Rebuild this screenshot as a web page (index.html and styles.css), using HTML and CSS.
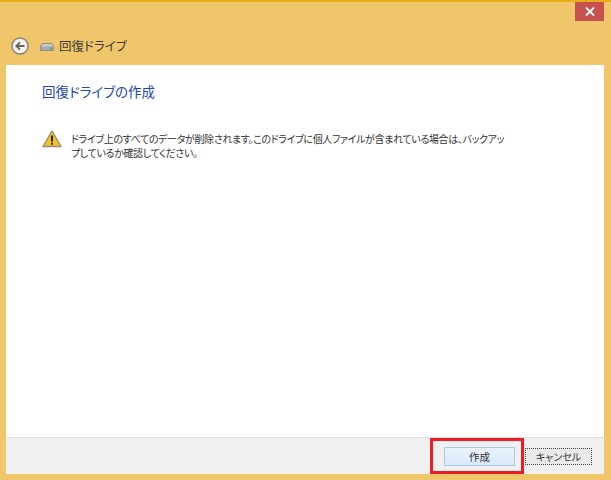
FILE: index.html
```html
<!DOCTYPE html>
<html lang="ja">
<head>
    <meta charset="utf-8">
    <link rel="stylesheet" href="styles.css">
</head>
<body>
    <div class="window">
        <div class="titlebar">
            <button class="close">
                <svg width="10" height="9" viewBox="0 0 10 9"><path d="M1 0.5 L9 8.5 M9 0.5 L1 8.5" stroke="#fff" stroke-width="1.8"/></svg>
            </button>
        </div>
        <div class="nav">
            <div class="back">
                <svg width="18" height="18" viewBox="0 0 18 18">
                    <circle cx="9" cy="9" r="8" fill="#f6f3ec" stroke="#8a867c" stroke-width="1.5"/>
                    <path d="M13.5 9 H5.5 M9 5.4 L5.3 9 L9 12.6" fill="none" stroke="#66645f" stroke-width="1.8"/>
                </svg>
            </div>
            <svg class="drive" width="14" height="8" viewBox="0 0 14 8">
                <path d="M2.5 0.5 H11.5 L13.5 3 V7.5 H0.5 V3 Z" fill="#c9cacb" stroke="#807f7c" stroke-width="0.8"/>
                <rect x="1" y="3.5" width="12" height="3.5" fill="#a9abae"/>
                <rect x="9.5" y="4.3" width="2.5" height="2" fill="#5aa84c"/>
            </svg>
            <span class="nav-title">回復ドライブ</span>
        </div>
        <div class="client">
            <div class="content">
                <h1>回復ドライブの作成</h1>
                <div class="warning">
                    <svg class="warn-icon" width="20" height="18" viewBox="0 0 20 18">
                        <path d="M10 1 L19 16.5 H1 Z" fill="#f4c51f" stroke="#8d8a80" stroke-width="1.3" stroke-linejoin="round"/>
                        <path d="M10 5.5 V11.5" stroke="#222" stroke-width="2"/>
                        <rect x="9" y="12.7" width="2" height="2" fill="#222"/>
                    </svg>
                    <p>ドライブ上のすべてのデータが削除されます。このドライブに個人ファイルが含まれている場合は、バックアッ<br>プしているか確認してください。</p>
                </div>
            </div>
            <div class="footer">
                <button class="btn primary">作成</button>
                <button class="btn cancel">キャンセル</button>
                <div class="highlight"></div>
            </div>
        </div>
    </div>
</body>
</html>
```

FILE: styles.css
```css
* {
    box-sizing: border-box;
}

body {
    margin: 0;
    font-family: "Noto Sans CJK JP", "Noto Sans", sans-serif;
    font-feature-settings: "palt";
}

.window {
    width: 611px;
    height: 480px;
    display: flex;
    flex-direction: column;
    background: #efc669;
    border-top: 2px solid #e8ae17;
    padding: 0 7px 6px 6px;
    overflow: hidden;
}

.titlebar {
    height: 19px;
    display: flex;
    justify-content: flex-end;
}

.close {
    width: 29px;
    height: 19px;
    padding: 0;
    border: 0;
    background: #c75050;
    display: flex;
    align-items: center;
    justify-content: center;
}

.nav {
    height: 44px;
    display: flex;
    align-items: center;
    padding: 4px 0 0 5px;
}

.back {
    width: 18px;
    height: 18px;
    margin-right: 11px;
}

.drive {
    margin-right: 5px;
    margin-top: 3px;
}

.nav-title {
    font-size: 12.5px;
    color: #3a3a3a;
}

.client {
    flex: 1;
    display: flex;
    flex-direction: column;
    background: #fff;
}

.content {
    flex: 1;
    padding: 15px 36px 0;
}

h1 {
    margin: 0 0 27px;
    font-size: 13.5px;
    line-height: 22px;
    font-weight: normal;
    color: #2248a8;
}

.warning {
    display: flex;
    gap: 9px;
}

.warn-icon {
    margin-top: 1px;
    flex-shrink: 0;
}

.warning p {
    margin: 3px 0 0;
    font-size: 10px;
    letter-spacing: -0.36px;
    line-height: 14px;
    color: #333;
    white-space: nowrap;
}

.footer {
    position: relative;
    height: 37px;
    display: flex;
    justify-content: flex-end;
    align-items: center;
    gap: 10px;
    padding: 0 12px 0 0;
    background: #f0f0f0;
    border-top: 1px solid #dfdfdf;
}

.btn {
    font-family: inherit;
    font-feature-settings: inherit;
    font-size: 10.5px;
    color: #333;
    padding: 0;
}

.primary {
    width: 71px;
    height: 19px;
    background: linear-gradient(#eaf3fc, #d9e9fa);
    border: 1px solid #a6c9ee;
}

.cancel {
    width: 67px;
    height: 17px;
    font-size: 10px;
    background: #e9e9e9;
    border: 1px dotted #444;
}

.highlight {
    position: absolute;
    left: 424px;
    top: 0;
    width: 94px;
    height: 36px;
    border: 3px solid #ed1c24;
}
```
